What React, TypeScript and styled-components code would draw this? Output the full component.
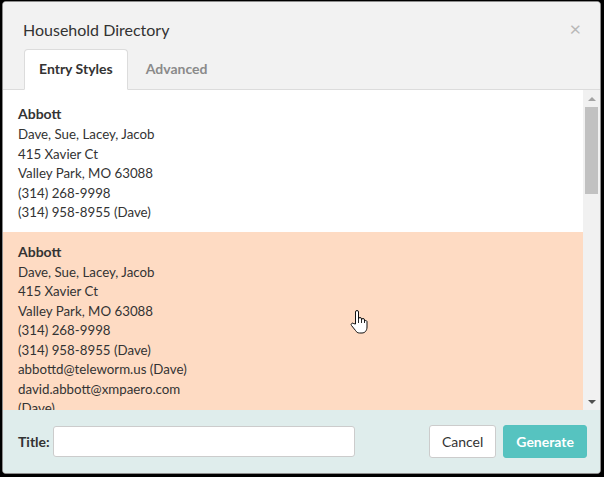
import * as React from 'react';
import styled, { createGlobalStyle } from 'styled-components';

const GlobalStyle = createGlobalStyle`
  html, body {
    margin: 0;
    padding: 0;
    background: #000;
  }
  body {
    font-family: Lato, "Open Sans", sans-serif;
    color: #333;
  }
`;

const Modal = styled.div`
  margin: 1px 3px 3px 2px;
  height: 473px;
  box-sizing: border-box;
  border: 1px solid #8c8c8c;
  border-radius: 4px;
  overflow: hidden;
  display: flex;
  flex-direction: column;
  background: #fff;
`;

const Header = styled.div`
  background: #f2f2f2;
  padding: 16px 21px 0 21px;
`;

const TitleRow = styled.div`
  display: flex;
  align-items: center;
  justify-content: space-between;
  height: 24px;
`;

const Title = styled.h4`
  margin: 0 0 0 -1px;
  font-size: 16px;
  font-weight: 400;
  line-height: 24px;
  color: #333;
`;

const Close = styled.span`
  font-size: 20px;
  line-height: 20px;
  color: #b8b8b8;
  margin-right: -2px;
  margin-top: -5px;
`;

const Tabs = styled.div`
  display: flex;
  margin: 7px -21px 0 -21px;
  padding-left: 21px;
  border-bottom: 1px solid #dcdcdc;
`;

const Tab = styled.div<{ active?: boolean }>`
  height: 41px;
  box-sizing: border-box;
  display: flex;
  align-items: center;
  padding: 0 14px 2px 14px;
  margin-right: 3px;
  margin-bottom: -1px;
  font-size: 14px;
  font-weight: 700;
  border: 1px solid ${({ active }) => (active ? '#dcdcdc' : 'transparent')};
  border-bottom-color: transparent;
  border-radius: 4px 4px 0 0;
  background: ${({ active }) => (active ? '#fff' : 'transparent')};
  color: ${({ active }) => (active ? '#333' : '#8a8a8a')};
`;

const Body = styled.div`
  flex: 1;
  min-height: 0;
  display: flex;
  position: relative;
`;

const List = styled.div`
  flex: 1;
  overflow: hidden;
  padding-top: 4px;
`;

const Entry = styled.div<{ highlight?: boolean }>`
  padding: 9px 15px 9px 15px;
  background: ${({ highlight }) => (highlight ? '#fedbc3' : '#fff')};
  font-size: 13.3px;
  line-height: 19.5px;
`;

const Name = styled.div`
  font-size: 14px;
  font-weight: 700;
  line-height: 22px;
`;

const Scrollbar = styled.div`
  width: 17px;
  background: #f1f1f1;
  display: flex;
  flex-direction: column;
  align-items: center;
`;

const Arrow = styled.div<{ down?: boolean }>`
  height: 17px;
  width: 17px;
  display: flex;
  align-items: center;
  justify-content: center;

  &::before {
    content: '';
    border-left: 4px solid transparent;
    border-right: 4px solid transparent;
    ${({ down }) =>
      down ? 'border-top: 4px solid #505050;' : 'border-bottom: 4px solid #a3a3a3;'}
  }
`;

const Track = styled.div`
  flex: 1;
  width: 100%;
  display: flex;
  justify-content: center;
`;

const Thumb = styled.div`
  width: 13px;
  background: #c1c1c1;
`;

const Pointer = styled.svg`
  position: absolute;
  left: 347px;
  top: 220px;
`;

const Footer = styled.div`
  height: 63px;
  background: #dfedec;
  display: flex;
  align-items: center;
  padding: 0 13px 0 15px;
  gap: 3px;
`;

const Label = styled.label`
  font-size: 14px;
  font-weight: 700;
  color: #333;
`;

const Input = styled.input`
  width: 302px;
  height: 31px;
  box-sizing: border-box;
  border: 1px solid #ccc;
  border-radius: 3px;
  background: #fff;
  margin-right: auto;
`;

const Button = styled.button<{ primary?: boolean }>`
  height: 33px;
  box-sizing: border-box;
  padding: 0 12px;
  margin-left: ${({ primary }) => (primary ? 4 : 0)}px;
  border-radius: 3px;
  font-family: Lato, sans-serif;
  font-size: 14px;
  font-weight: ${({ primary }) => (primary ? 700 : 400)};
  border: 1px solid ${({ primary }) => (primary ? '#55c2bf' : '#cccccc')};
  background: ${({ primary }) => (primary ? '#56c3c0' : '#fff')};
  color: ${({ primary }) => (primary ? '#fff' : '#333')};
`;

type Household = {
  name: string;
  lines: string[];
  highlight?: boolean;
};

const households: Household[] = [
  {
    name: 'Abbott',
    lines: [
      'Dave, Sue, Lacey, Jacob',
      '415 Xavier Ct',
      'Valley Park, MO 63088',
      '(314) 268-9998',
      '(314) 958-8955 (Dave)',
    ],
  },
  {
    name: 'Abbott',
    highlight: true,
    lines: [
      'Dave, Sue, Lacey, Jacob',
      '415 Xavier Ct',
      'Valley Park, MO 63088',
      '(314) 268-9998',
      '(314) 958-8955 (Dave)',
      'abbottd@teleworm.us (Dave)',
      'david.abbott@xmpaero.com',
      '(Dave)',
    ],
  },
];

const HandCursor = () => (
  <Pointer width="18" height="24" viewBox="0 0 18 24">
    <path
      d="M5.5 14 V2 a1.5 1.5 0 0 1 3 0 V9 a1.5 1.5 0 0 1 3 0 V10 a1.5 1.5 0 0 1 3 0 V11 a1.5 1.5 0 0 1 2.5 0.5 V17 c0 3.5 -2 6 -5 6 H9.5 c-2 0 -3 -1 -4 -2.5 L1.5 15.5 a1.4 1.4 0 0 1 2.3 -1.8 Z"
      fill="#fff"
      stroke="#111"
      strokeWidth="1"
      strokeLinejoin="round"
    />
    <path d="M8.5 9 V13 M11.5 10 V13 M14.5 11 V13" stroke="#111" strokeWidth="0.9" />
  </Pointer>
);

export default function App() {
  return (
    <>
      <GlobalStyle />
      <Modal>
        <Header>
          <TitleRow>
            <Title>Household Directory</Title>
            <Close>×</Close>
          </TitleRow>
          <Tabs>
            <Tab active>Entry Styles</Tab>
            <Tab>Advanced</Tab>
          </Tabs>
        </Header>
        <Body>
          <List>
            {households.map((h, i) => (
              <Entry key={i} highlight={h.highlight}>
                <Name>{h.name}</Name>
                {h.lines.map((line, j) => (
                  <div key={j}>{line}</div>
                ))}
              </Entry>
            ))}
          </List>
          <Scrollbar>
            <Arrow />
            <Track>
              <Thumb style={{ height: 87 }} />
            </Track>
            <Arrow down />
          </Scrollbar>
          <HandCursor />
        </Body>
        <Footer>
          <Label>Title:</Label>
          <Input />
          <Button>Cancel</Button>
          <Button primary>Generate</Button>
        </Footer>
      </Modal>
    </>
  );
}
